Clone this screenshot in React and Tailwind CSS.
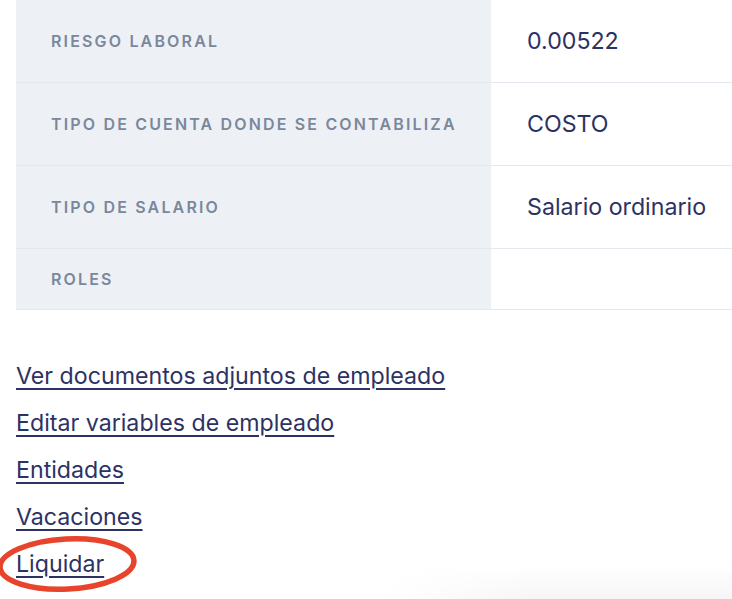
import React from 'react'

const ROWS = [
  { label: 'Riesgo laboral', value: '0.00522' },
  { label: 'Tipo de cuenta donde se contabiliza', value: 'COSTO' },
  { label: 'Tipo de salario', value: 'Salario ordinario' },
  { label: 'Roles', value: '' },
]

const LINKS = [
  'Ver documentos adjuntos de empleado',
  'Editar variables de empleado',
  'Entidades',
  'Vacaciones',
  'Liquidar',
]

export default function App() {
  return (
    <div
      className="relative h-[599px] w-[732px] overflow-hidden bg-white"
      style={{ fontFamily: 'Inter, "Liberation Sans", Arial, sans-serif' }}
    >
      <div className="ml-4 w-[760px] border-b border-[#e4e9ef]">
        {ROWS.map((row, i) => (
          <div
            key={row.label}
            className={`grid grid-cols-[475px_1fr] ${i > 0 ? 'border-t border-[#e4e9ef]' : ''}`}
          >
            <div className="flex items-center bg-[#edf1f6] py-6 pl-[35px] text-[16px] font-semibold uppercase leading-[12px] tracking-[0.135em] text-[#7b879b]">
              {row.label}
            </div>
            <div className="py-6 pl-9 text-[23.2px] leading-[34px] text-[#2c3263]">{row.value}</div>
          </div>
        ))}
      </div>

      <div className="ml-4 mt-[49px] flex flex-col gap-[13px]">
        {LINKS.map((l) => (
          <a
            key={l}
            href="#"
            className="w-fit text-[23.2px] leading-[34px] text-[#2c3263] underline decoration-[1.5px] underline-offset-[4px]"
          >
            {l}
          </a>
        ))}
      </div>

      <svg className="pointer-events-none absolute left-[-5px] top-[534px]" width="144" height="62" viewBox="0 0 144 62">
        <ellipse cx="72" cy="30" rx="67" ry="25" fill="none" stroke="#e8432b" strokeWidth="5.5" transform="rotate(-3 72 30)" />
      </svg>

      <div className="pointer-events-none absolute bottom-0 left-[380px] right-0 h-[32px] bg-gradient-to-b from-transparent to-[#f5f5f5] [mask-image:linear-gradient(to_right,transparent,black_45%)]" />
    </div>
  )
}
